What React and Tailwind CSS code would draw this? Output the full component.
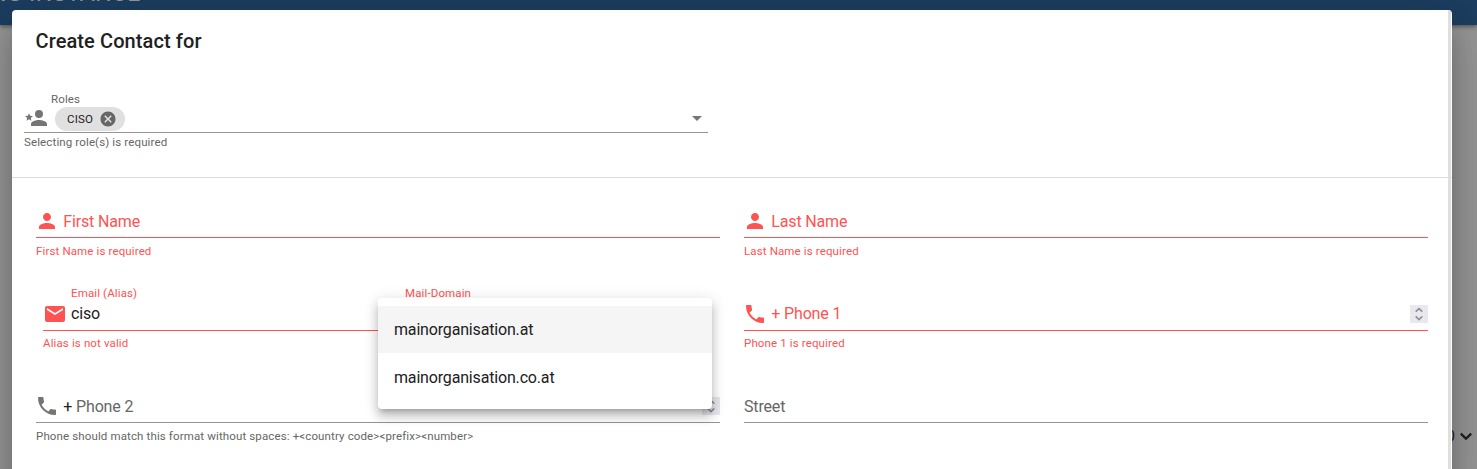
import React from "react";

const PATHS = {
  person: "M12 12c2.21 0 4-1.79 4-4s-1.79-4-4-4-4 1.79-4 4 1.79 4 4 4zm0 2c-2.67 0-8 1.34-8 4v2h16v-2c0-2.66-5.33-4-8-4z",
  mail: "M20 4H4c-1.1 0-1.99.9-1.99 2L2 18c0 1.1.9 2 2 2h16c1.1 0 2-.9 2-2V6c0-1.1-.9-2-2-2zm0 4l-8 5-8-5V6l8 5 8-5v2z",
  phone: "M6.62 10.79c1.44 2.83 3.76 5.14 6.59 6.59l2.2-2.2c.27-.27.67-.36 1.02-.24 1.12.37 2.33.57 3.57.57.55 0 1 .45 1 1V20c0 .55-.45 1-1 1-9.39 0-17-7.61-17-17 0-.55.45-1 1-1h3.5c.55 0 1 .45 1 1 0 1.25.2 2.45.57 3.57.11.35.03.74-.25 1.02l-2.2 2.2z",
  cancel: "M12 2C6.47 2 2 6.47 2 12s4.47 10 10 10 10-4.47 10-10S17.53 2 12 2zm5 13.59L15.59 17 12 13.41 8.41 17 7 15.59 10.59 12 7 8.41 8.41 7 12 10.59 15.59 7 17 8.41 13.41 12 17 15.59z",
};

function Icon({ name, className }) {
  return (
    <svg viewBox="0 0 24 24" fill="currentColor" className={className}>
      <path d={PATHS[name]} />
    </svg>
  );
}

function RoleIcon() {
  return (
    <svg viewBox="0 0 24 24" fill="currentColor" className="-mt-px -ml-[0.5px] h-6 w-6 text-[#757575]">
      <path d="M15 4a4 4 0 1 0 0 8 4 4 0 0 0 0-8zm0 10c-2.67 0-8 1.33-8 4v2h16v-2c0-2.67-5.33-4-8-4z" />
      <path d="M5 13.28l2.45 1.49-.65-2.81L9 10.11l-2.89-.25L5 7.19 3.87 9.86 1 10.11l2.18 1.85-.68 2.81L5 13.28z" />
    </svg>
  );
}

function Spinner() {
  return (
    <span className="flex h-[18px] w-[18px] shrink-0 items-center justify-center bg-[#e9e9ed] text-[#8f8f9d]">
      <svg viewBox="0 0 18 18" fill="none" stroke="currentColor" strokeWidth="1.7" className="h-[18px] w-[18px]">
        <path d="M5.7 6.7L9 3.6l3.3 3.1M5.7 11.4L9 14.5l3.3-3.1" />
      </svg>
    </span>
  );
}

function Small({ className = "", children }) {
  return <div className={`text-[11.5px] leading-4 tracking-[0.13px] ${className}`}>{children}</div>;
}

function Field({ icon, prefix, label, hint, error, spinner, textPad = "pt-[5px]", hintGap = "mt-[5px]" }) {
  return (
    <div className={error ? "min-w-0 text-[#ff5252]" : "min-w-0 text-[#666]"}>
      <div className={`flex h-[33px] items-start border-b ${error ? "border-[#ff5252]" : "border-[#949494]"}`}>
        {icon && (
          <Icon name={icon} className={`mt-[4px] mr-[4px] -ml-[0.7px] h-6 w-6 shrink-0 ${error ? "" : "text-[#757575]"}`} />
        )}
        <span className={`flex-1 text-base leading-6 tracking-[-0.16px] ${textPad}`}>
          {prefix && <span className={error ? "" : "text-[#212121]"}>{prefix} </span>}
          {label}
        </span>
        {spinner && (
          <span className="mt-[7px]">
            <Spinner />
          </span>
        )}
      </div>
      <Small className={hintGap}>{hint}</Small>
    </div>
  );
}

export default function App() {
  return (
    <div className="relative h-[469px] w-full overflow-hidden bg-[#979797] font-['Roboto',sans-serif]">
      <header className="h-[25px] overflow-hidden bg-[#1d3e60] shadow-[0_2px_4px_rgba(0,0,0,0.4)]">
        <div className="-mt-[18px] -ml-[10px] text-[23px] leading-6 tracking-[0.4px] text-[#999]">NG INSTANCE</div>
      </header>
      <div className="absolute top-[426px] right-0 flex items-center text-[#1f1f1f]">
        <span className="text-sm leading-[18px]">10</span>
        <svg viewBox="0 0 22 20" fill="none" stroke="currentColor" strokeWidth="2.2" className="h-[20px] w-[22px]">
          <path d="M5.8 7.6L11 12.6l5.2-5" />
        </svg>
      </div>

      <main className="absolute top-[10px] left-[12px] h-[480px] w-[1440px] overflow-hidden rounded-[4px] bg-white shadow-[0_11px_15px_-7px_rgba(0,0,0,0.2),0_24px_38px_3px_rgba(0,0,0,0.14),0_9px_46px_8px_rgba(0,0,0,0.12)]">
        <div className="flex h-full">
          <div className="w-[1436px] shrink-0">
            <h1 className="pt-[15px] pl-[23.5px] text-xl leading-8 font-medium tracking-[0.1px] text-[#212121]">
              Create Contact for
            </h1>
            <section className="relative z-10 h-[121px] w-[1440px] border-b border-[#dcdcdc] pt-[34px] pl-3">
              <div className="w-[684px]">
                <Small className="pl-[27px] text-[#666]">Roles</Small>
                <div className="flex h-[26px] items-start border-b border-[#949494]">
                  <RoleIcon />
                  <span className="ml-[7.5px] flex h-6 w-[70px] items-center rounded-full bg-[#e0e0e0] pl-3 text-[11.5px] tracking-[0.2px] text-[#212121]">
                    <span className="pt-px">CISO</span>
                    <Icon name="cancel" className="ml-[6px] h-[18px] w-[18px] text-[#666]" />
                  </span>
                  <span className="mt-[9px] mr-[6px] ml-auto border-x-5 border-t-5 border-x-transparent border-t-[#757575]" />
                </div>
                <Small className="mt-px text-[#666]">Selecting role(s) is required</Small>
              </div>
            </section>
            <section className="flex flex-col pt-[27px] pr-5 pl-6">
              <div className="grid h-[93px] grid-cols-2 gap-6">
                <Field icon="person" label="First Name" hint="First Name is required" error />
                <Field icon="person" label="Last Name" hint="Last Name is required" error />
              </div>
              <div className="grid h-[92px] grid-cols-2 gap-6">
                <div className="-mt-[13px] flex pl-[7px] text-[#ff5252]">
                  <div className="w-[335px]">
                    <Small className="pl-[28px]">Email (Alias)</Small>
                    <div className="flex h-[30px] border-b border-[#ff5252]">
                      <Icon name="mail" className="mt-px mr-1 h-6 w-6" />
                      <span className="pt-px text-base leading-6 tracking-[-0.16px] text-[#212121]">ciso</span>
                    </div>
                    <Small className="mt-[4px]">Alias is not valid</Small>
                  </div>
                  <Small className="pl-[27px]">Mail-Domain</Small>
                </div>
                <Field
                  icon="phone"
                  prefix="+"
                  label="Phone 1"
                  hint="Phone 1 is required"
                  textPad="pt-[4px]"
                  hintGap="mt-[4px]"
                  error
                  spinner
                />
              </div>
              <div className="grid grid-cols-2 gap-6">
                <Field
                  icon="phone"
                  prefix="+"
                  label="Phone 2"
                  hint="Phone should match this format without spaces: +<country code><prefix><number>"
                  spinner
                />
                <Field label="Street" />
              </div>
            </section>
          </div>
          <div className="w-[3px] bg-[#dfdfdf]" />
        </div>
      </main>

      <ul className="absolute top-[298px] left-[378px] w-[334px] rounded-[4px] bg-white pt-2 pb-2 text-base tracking-[-0.17px] text-[#212121] shadow-[0_5px_5px_-3px_rgba(0,0,0,0.2),0_8px_10px_1px_rgba(0,0,0,0.14),0_3px_14px_2px_rgba(0,0,0,0.12)]">
        <li className="flex h-[47px] items-center bg-[#f5f5f5] px-4">mainorganisation.at</li>
        <li className="flex h-12 items-center px-4 pt-[2px]">mainorganisation.co.at</li>
      </ul>
    </div>
  );
}
